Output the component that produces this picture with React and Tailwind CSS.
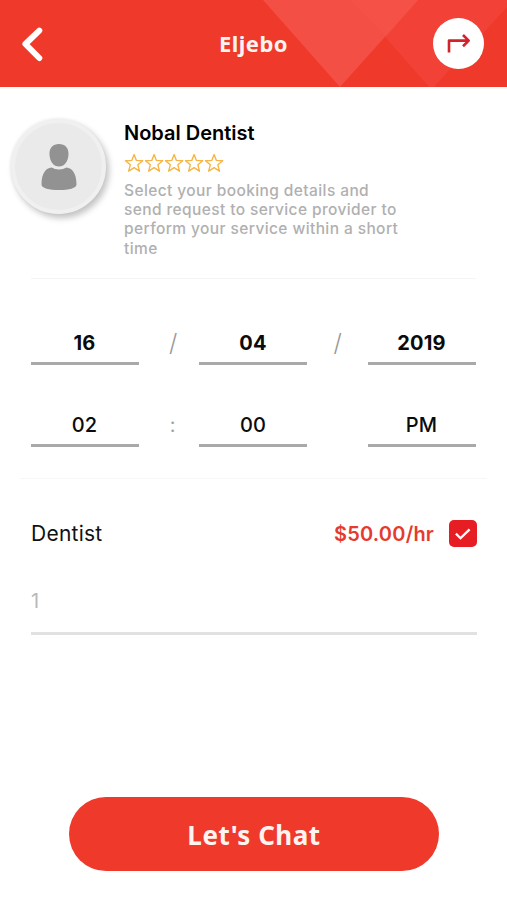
const STAR = "M10 1.6 L12.3 7.4 L18.6 7.8 L13.8 11.8 L15.4 18.2 L10 14.7 L4.6 18.2 L6.2 11.8 L1.4 7.8 L7.7 7.4 Z";

function Header() {
  return (
    <header className="relative flex h-[87px] items-center justify-between overflow-hidden bg-[#ee392b] pr-[23px] pl-[21px]">
      <svg className="absolute inset-0" width="507" height="87" viewBox="0 0 507 87">
        <path d="M350 0H507V7L434 87H429L386 38Z" fill="#f24136" />
        <path d="M263 0H418L340 87Z" fill="#f44f44" />
        <path d="M350 0H418L386 36Z" fill="#f55146" />
      </svg>
      <button aria-label="Back" className="relative flex w-[51px]">
        <svg width="22" height="36" viewBox="0 0 22 36" fill="none" stroke="#fff" strokeWidth="6" strokeLinecap="round" strokeLinejoin="round">
          <path d="M18.3 4.6L4.4 18L18.3 32" />
        </svg>
      </button>
      <h1 className="relative -mt-[1px] pl-[2px] font-['Noto_Sans',sans-serif] text-[22px] leading-[30px] font-bold tracking-[0.45px] text-[#fff3f0]">Eljebo</h1>
      <button aria-label="Share" className="relative flex h-[51px] w-[51px] items-center justify-center rounded-full bg-white">
        <svg width="51" height="51" viewBox="0 0 51 51" fill="none" stroke="#d4222b" strokeWidth="2.6" strokeLinejoin="round">
          <path d="M16 34.5V22.6H35.5M30 17L35.7 22.6L30 28.2" />
        </svg>
      </button>
    </header>
  );
}

function Profile() {
  return (
    <section className="mx-[31px] flex h-[192px] border-b border-[#f5f5f5]">
      <div className="-ml-[20px] mt-[32px] flex h-[95px] w-[95px] shrink-0 items-center justify-center rounded-full border-[4px] border-[#f0f0f0] bg-[#eaeaea] shadow-[3px_4px_6px_rgba(0,0,0,0.24),-1px_-1px_3px_rgba(0,0,0,0.05)]">
        <svg width="36" height="48" viewBox="0 0 36 48" fill="#929292">
          <path d="M18 1C24 1 27.8 5 27.5 11.5C27.2 18.8 23.2 23.5 18 23.5S8.8 18.8 8.5 11.5C8.2 5 12 1 18 1Z" />
          <path d="M10.5 24.5C13 25.5 15 26.5 18 26.5S23 25.5 25.5 24.5C31 25 35.5 30 35.5 41.5C35.5 45.2 28 47 18 47S.5 45.2 .5 41.5C.5 30 5 25 10.5 24.5Z" />
        </svg>
      </div>
      <div className="ml-[18px] pt-[33px]">
        <h2 className="text-[20px] leading-[26px] font-semibold whitespace-nowrap text-black">Nobal Dentist</h2>
        <div className="-ml-[0.5px] flex h-[20px] pt-[7px]">
          {[0, 1, 2, 3, 4].map((i) => (
            <svg key={i} className="h-5 w-[20.2px] shrink-0" viewBox="0 0 20 20" fill="none" stroke="#f6b545" strokeWidth="1.4" strokeLinejoin="round">
              <path d={STAR} />
            </svg>
          ))}
        </div>
        <p className="pt-[15px] text-[15.5px] leading-[19.2px] font-medium tracking-[0.4px] whitespace-nowrap text-[#b0b0b0]">
          Select your booking details and<br />send request to service provider to<br />perform your service within a short<br />time
        </p>
      </div>
    </section>
  );
}

function Field({ children, bold }) {
  return (
    <div className={`h-[45px] w-[108px] shrink-0 border-b-[3px] border-[#a9a9a9] text-center text-[20px] leading-[46px] text-[#0b0b0b] ${bold ? "font-bold tracking-[0.2px]" : "font-medium tracking-[0.1px]"}`}>
      {children}
    </div>
  );
}

export default function App() {
  return (
    <main className="flex h-[900px] w-[507px] flex-col overflow-hidden bg-white font-['Inter',sans-serif]">
      <Header />
      <Profile />
      <section className="mx-[20px] h-[200px] border-b border-[#f7f7f7] pr-[11px] pl-[10.5px] pt-[41px]">
        <div className="flex h-[45px]">
          <Field bold>16</Field>
          <div className="w-[60.5px] pl-[9px] text-center text-[24px] leading-[46px] font-light text-[#999]">/</div>
          <Field bold>04</Field>
          <div className="w-[60.5px] pl-[1px] text-center text-[24px] leading-[46px] font-light text-[#999]">/</div>
          <Field bold>2019</Field>
        </div>
        <div className="mt-[37px] flex h-[45px]">
          <Field>02</Field>
          <div className="w-[60.5px] pl-[8px] text-center text-[20px] leading-[46px] text-[#a0a0a0]">:</div>
          <Field>00</Field>
          <div className="w-[60.5px]" />
          <Field>PM</Field>
        </div>
      </section>
      <section className="mr-[30px] ml-[31px]">
        <div className="mt-[40.5px] flex h-[28px] items-center">
          <span className="text-[21px] tracking-[0.25px] text-[#111]">Dentist</span>
          <span className="ml-auto text-[20px] font-semibold tracking-[0.2px] text-[#e53b2f]">$50.00/hr</span>
          <span role="checkbox" aria-checked="true" className="mr-[0.5px] ml-[15px] flex h-[27.5px] w-[27.5px] items-center justify-center rounded-[5px] bg-[#e71d24]">
            <svg width="28" height="28" viewBox="0 0 28 28" fill="none" stroke="#fff" strokeWidth="2.4">
              <path d="M7 13.7L11.7 18.3L21 9.2" />
            </svg>
          </span>
        </div>
        <div className="mt-[34px] h-[53px] border-b-[3px] border-[#e1e1e1] text-[20px] leading-[39px] text-[#b9b9b9]">1</div>
      </section>
      <button className="mt-[162.5px] ml-[69px] h-[74px] w-[370px] rounded-full bg-[#ee392b] pt-[2px] font-['Noto_Sans',sans-serif] text-[26px] leading-[36px] font-bold tracking-[0.5px] text-[#fff3f0]">
        Let's Chat
      </button>
    </main>
  );
}
